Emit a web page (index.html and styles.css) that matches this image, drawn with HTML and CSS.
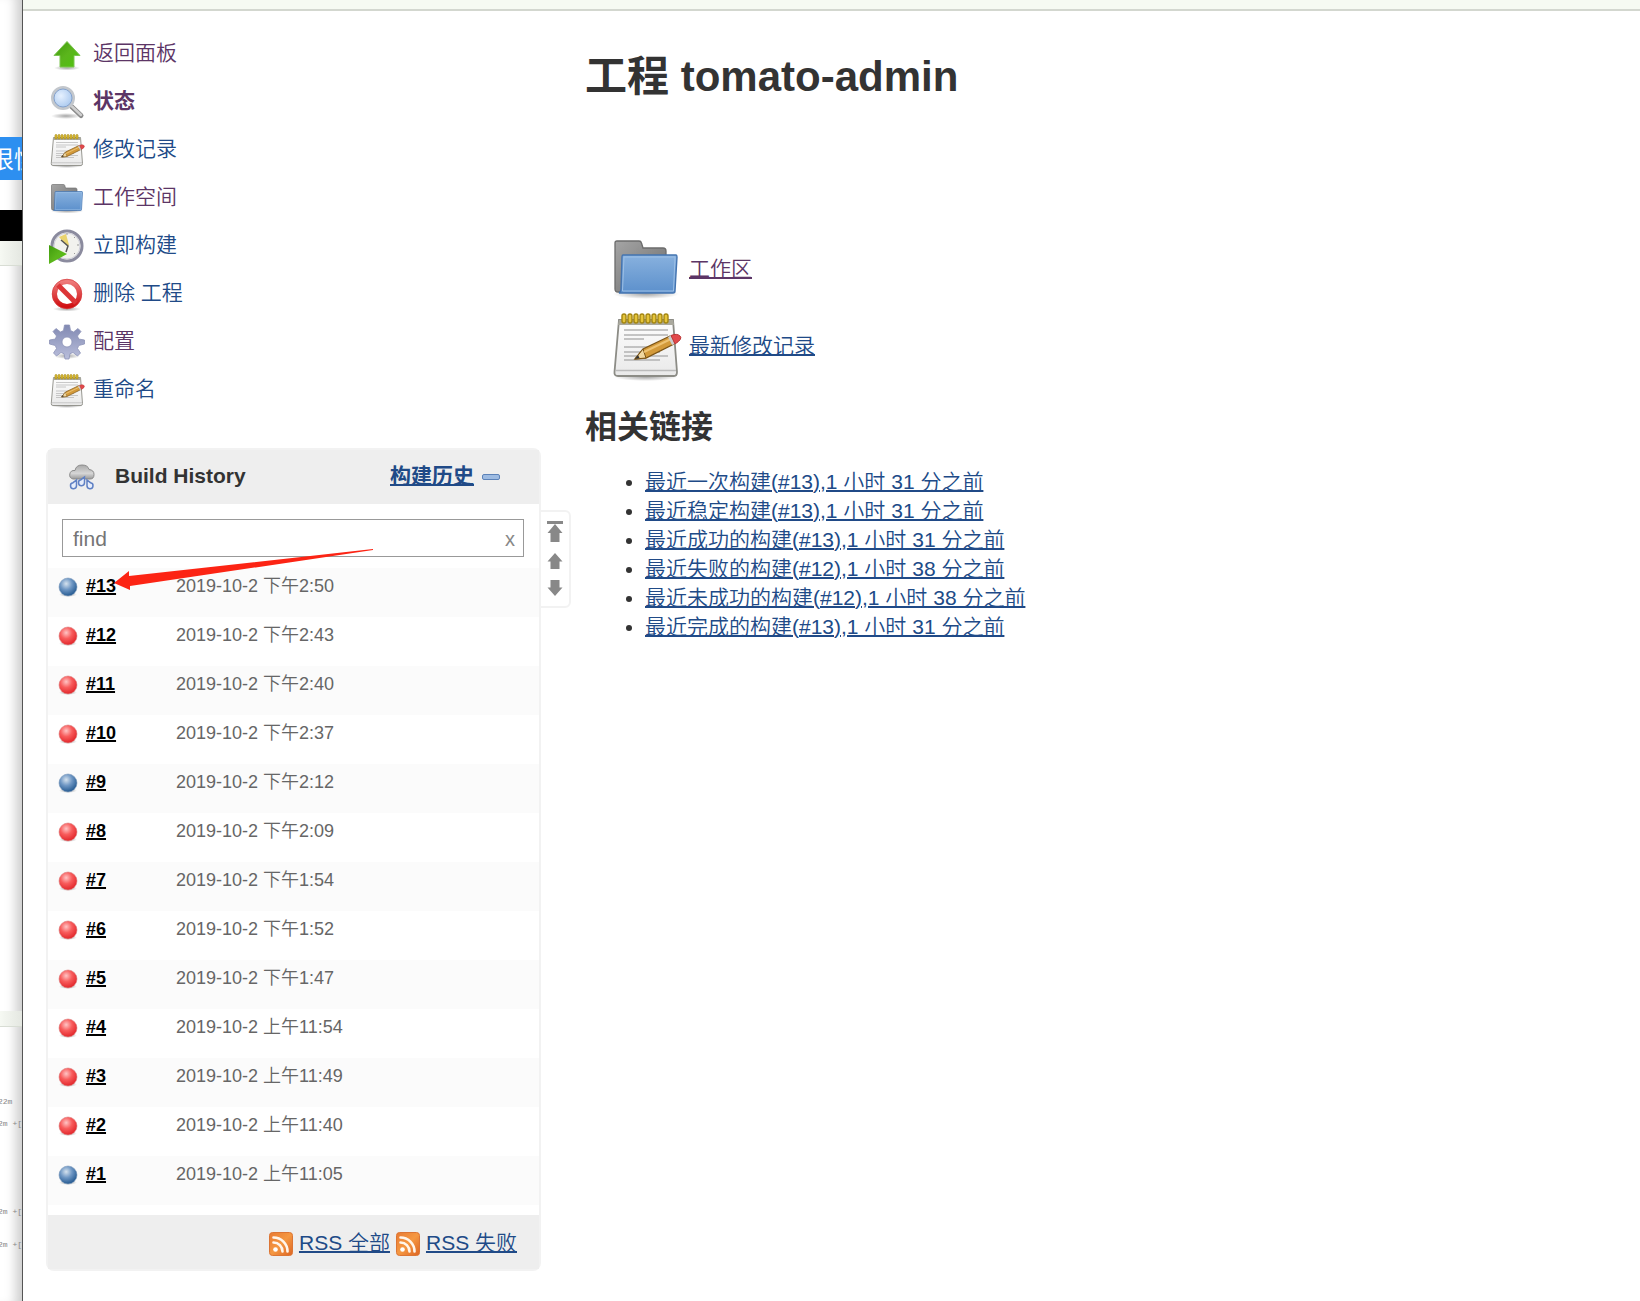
FILE: index.html
```html
<!DOCTYPE html>
<html lang="zh-CN">
<head>
<meta charset="utf-8">
<title>tomato-admin [Jenkins]</title>
<link rel="stylesheet" href="styles.css">
</head>
<body>
<svg class="sprite" aria-hidden="true">
  <defs>
    <linearGradient id="g-green" x1="0" y1="0" x2="1" y2="1"><stop offset="0" stop-color="#3f9a0c"/><stop offset=".5" stop-color="#5bb51c"/><stop offset="1" stop-color="#4fc40e"/></linearGradient>
    <linearGradient id="g-folder" x1="0" y1="0" x2="0" y2="1"><stop offset="0" stop-color="#88b1de"/><stop offset="1" stop-color="#5c90cc"/></linearGradient>
    <linearGradient id="g-back" x1="0" y1="0" x2="1" y2="1"><stop offset="0" stop-color="#a5a5a5"/><stop offset="1" stop-color="#6c6c6c"/></linearGradient>
    <linearGradient id="g-paper" x1="0" y1="0" x2="0" y2="1"><stop offset="0" stop-color="#fdfdfd"/><stop offset="1" stop-color="#e9e9e9"/></linearGradient>
    <linearGradient id="g-red" x1="0" y1="0" x2="0" y2="1"><stop offset="0" stop-color="#ee7b7b"/><stop offset="1" stop-color="#d00f12"/></linearGradient>
    <linearGradient id="g-gear" x1="0" y1="0" x2="0" y2="1"><stop offset="0" stop-color="#8189b2"/><stop offset="1" stop-color="#b9bedb"/></linearGradient>
    <linearGradient id="g-cloud" x1="0" y1="0" x2="0" y2="1"><stop offset="0" stop-color="#a9a9a9"/><stop offset=".6" stop-color="#d6d6d6"/><stop offset="1" stop-color="#999"/></linearGradient>
    <linearGradient id="g-rss" x1="0" y1="0" x2="1" y2="1"><stop offset="0" stop-color="#e87a32"/><stop offset=".5" stop-color="#f59842"/><stop offset="1" stop-color="#dc6422"/></linearGradient>
    <radialGradient id="g-lens" cx=".4" cy=".4" r=".6"><stop offset="0" stop-color="#e6f1ff"/><stop offset="1" stop-color="#a9c8ee"/></radialGradient>
    <radialGradient id="g-shadow"><stop offset="0" stop-color="#000" stop-opacity=".35"/><stop offset="1" stop-color="#000" stop-opacity="0"/></radialGradient>
    <radialGradient id="g-ball-red" cx=".4" cy=".32" r=".65"><stop offset="0" stop-color="#ffc4c4"/><stop offset=".5" stop-color="#f85c5c"/><stop offset="1" stop-color="#e42c30"/></radialGradient>
    <radialGradient id="g-ball-blue" cx=".4" cy=".32" r=".65"><stop offset="0" stop-color="#d5e2ee"/><stop offset=".5" stop-color="#6f97c4"/><stop offset="1" stop-color="#2c6096"/></radialGradient>
  </defs>
  <symbol id="i-up" viewBox="0 0 36 36">
    <ellipse cx="18" cy="32" rx="13" ry="2.5" fill="url(#g-shadow)"/>
    <path d="M18 5.500 31 19.500H25V31H11V19.500H5Z" fill="url(#g-green)" stroke="#7cc552" stroke-width="1" stroke-linejoin="round"/>
  </symbol>
  <symbol id="i-search" viewBox="0 0 36 36">
    <ellipse cx="17" cy="32" rx="15" ry="3" fill="url(#g-shadow)"/>
    <path d="M22 22 32 31.500" stroke="#8b8b8b" stroke-width="5" stroke-linecap="round"/>
    <path d="M23 22.500 32 31" stroke="#cfcfcf" stroke-width="2.500" stroke-linecap="round"/>
    <circle cx="14" cy="14" r="10.500" fill="url(#g-lens)" stroke="#c3c7cc" stroke-width="3"/>
    <circle cx="14" cy="14" r="9" fill="none" stroke="#84a2ce" stroke-width="1"/>
  </symbol>
  <symbol id="i-note" viewBox="0 -2 72 72">
    <ellipse cx="36" cy="66" rx="32" ry="4" fill="url(#g-shadow)"/>
    <path d="M9 9H63L67 61Q67 65 64 65H8Q4 65 4.500 61Z" fill="url(#g-paper)" stroke="#8c8c86" stroke-width="1.800"/>
    <path d="M9 9H63L64 14H8Z" fill="#aaa99e"/>
    <path d="M6 59.500H66" stroke="#bbb" stroke-width="1.500"/>
    <path d="M14 19H58M14 24H58M14 28H34M14 36H58M14 41H50M14 45H58M14 49H50" stroke="#b3b3b3" stroke-width="1.400"/>
    <g fill="#e5c43a" stroke="#a48610" stroke-width="1.400"><rect x="12" y="3" width="4" height="9" rx="2"/><rect x="18" y="3" width="4" height="9" rx="2"/><rect x="24" y="3" width="4" height="9" rx="2"/><rect x="30" y="3" width="4" height="9" rx="2"/><rect x="36" y="3" width="4" height="9" rx="2"/><rect x="42" y="3" width="4" height="9" rx="2"/><rect x="48" y="3" width="4" height="9" rx="2"/><rect x="54" y="3" width="4" height="9" rx="2"/></g>
    <path d="M25 48 33 38 60 25 64 33 36 47Z" fill="#d39a3a" stroke="#7c5415" stroke-width="1.300"/>
    <path d="M25 48 33 38 36 47Z" fill="#f0d7a0" stroke="#7c5415"/>
    <path d="M25 48 28 44 29.500 47Z" fill="#333"/>
    <path d="M34 41 61 28" stroke="#edc272" stroke-width="2"/>
    <path d="M58 26 62 34 65 33 61 24.500Z" fill="#ccc"/>
    <path d="M61 24.500Q67 22 70 25T65 33Z" fill="#e2494b" stroke="#ba3535"/>
  </symbol>
  <symbol id="i-folder" viewBox="0 -2 72 72">
    <ellipse cx="36" cy="60" rx="33" ry="5" fill="url(#g-shadow)"/>
    <path d="M5 9Q5 7 7 7H29Q31 7 31.500 9L33 14H53Q56 14 56 17V58H8Q5 58 5 55Z" fill="url(#g-back)" stroke="#6c6c6c" stroke-width="1.300"/>
    <path d="M13 21H66Q67 21 67 23L65 57Q65 59 63 59H9Q11 58 11 55L12 23Q12 21 13 21Z" fill="url(#g-folder)" stroke="#4474b0" stroke-width="1.400"/>
    <path d="M14 23H65L63.500 57H12.500Z" fill="none" stroke="#9dc0e6" stroke-width="1"/>
  </symbol>
  <symbol id="i-clock" viewBox="0 0 36 36">
    <circle cx="18" cy="18" r="15" fill="#f2f2ee" stroke="#8b8b9e" stroke-width="3"/>
    <circle cx="18" cy="18" r="13" fill="none" stroke="#cfcfda"/>
    <path d="M18 18 10 9 17 6 20 17Z" fill="#e9d36f"/>
    <path d="M12 12 19 18 17 24" fill="none" stroke="#555" stroke-width="1.500"/>
    <path d="M18 5V7M30 17H28M26 9 25 10M26 26 25 25" stroke="#999"/>
    <path d="M0 17 18 26 0 36Z" fill="url(#g-green)"/>
  </symbol>
  <symbol id="i-stop" viewBox="0 0 36 36">
    <ellipse cx="18" cy="33" rx="14" ry="2.500" fill="url(#g-shadow)"/>
    <circle cx="18" cy="18" r="12.500" fill="#fff" stroke="url(#g-red)" stroke-width="5"/>
    <path d="M9 9 27 27" stroke="#dc3537" stroke-width="5"/>
    <circle cx="18" cy="18" r="14.800" fill="none" stroke="#d64042" stroke-width=".7"/>
  </symbol>
  <symbol id="i-gear" viewBox="0 0 36 36">
    <ellipse cx="18" cy="32" rx="13" ry="3" fill="url(#g-shadow)"/>
    <path fill-rule="evenodd" d="M15.500 1H20.500L21.500 6.500 24.500 8 29 4.500 32 7.500 28.500 12 29.700 15 35.500 16V20L29.700 21.500 28.500 24.500 31.500 29 28.500 32 24 28.500 21 29.700 20 35H16L15 29.700 12 28.500 7.500 32 4.500 29 7.500 24.500 6.300 21.500.5 20V16L6.300 15 7.500 12 4 7.500 7 4.500 11.500 8 14.500 6.500ZM18 13A5 5 0 1 0 18 23 5 5 0 1 0 18 13Z" fill="url(#g-gear)" stroke="#8d93b8" stroke-width=".8" stroke-linejoin="round"/>
  </symbol>
  <symbol id="i-rain" viewBox="0 0 26 26">
    <path d="M4 15Q0 14 .8 10T6 6.500Q7 1 13 1T20 5.500Q25 6 25 10.500T21 15Z" fill="url(#g-cloud)" stroke="#8b8b8b"/>
    <g fill="#e6edfb" stroke="#5f80c4" stroke-width="1.500"><path d="M7.500 16V21.500A3 3 0 1 1 4 18.700Z"/><path d="M15.500 13V18.500A3 3 0 1 1 12 15.700Z"/><path d="M18 16V21.500A3 3 0 1 0 21.500 18.700Z"/></g>
  </symbol>
  <symbol id="i-rss" viewBox="0 0 24 24">
    <rect x=".5" y=".5" width="23" height="23" rx="3" fill="url(#g-rss)" stroke="#dc7534"/>
    <circle cx="6.500" cy="17.500" r="2.300" fill="#fff"/>
    <path d="M4.500 10.500A9 9 0 0 1 13.500 19.500M4.500 5.500A14 14 0 0 1 18.500 19.500" fill="none" stroke="#fff6ec" stroke-width="2.600" stroke-linecap="round"/>
  </symbol>
  <symbol id="i-red" viewBox="0 0 20 20"><ellipse cx="10" cy="17.500" rx="9" ry="2.500" fill="url(#g-shadow)"/><circle cx="10" cy="10" r="9" fill="url(#g-ball-red)" stroke="#dc8080" stroke-width=".6"/></symbol>
  <symbol id="i-blue" viewBox="0 0 20 20"><ellipse cx="10" cy="17.500" rx="9" ry="2.500" fill="url(#g-shadow)"/><circle cx="10" cy="10" r="9" fill="url(#g-ball-blue)" stroke="#7c9abc" stroke-width=".6"/></symbol>
  <symbol id="i-arrow" viewBox="0 0 16 18"><path d="M8 1 15.500 9.500H12.500V17H3.500V9.500H.5Z" fill="currentColor"/></symbol>
  <symbol id="i-top" viewBox="0 0 18 22"><path d="M1 0H17V3H1ZM9 3 16.500 12H13.500V21H4.500V12H1.500Z" fill="currentColor"/></symbol>
</svg>

<div class="desktop">
  <aside class="behind" aria-hidden="true">
    <div class="behind-selection">很慢</div>
    <div class="behind-black"></div>
    <div class="behind-bar"></div>
    <div class="behind-bar behind-bar-low"></div>
    <div class="behind-log"><span>22m</span><span>2m +[</span></div>
    <div class="behind-log behind-log-two"><span>2m +[</span></div>
    <div class="behind-log behind-log-three"><span>2m +[</span></div>
  </aside>

  <div class="window">
    <div class="breadcrumb-bar"></div>
    <div class="page">
      <div class="side">
        <nav class="tasks">
          <a class="task visited" href="#"><svg class="icon"><use href="#i-up"/></svg>返回面板</a>
          <a class="task visited current" href="#"><svg class="icon"><use href="#i-search"/></svg>状态</a>
          <a class="task" href="#"><svg class="icon"><use href="#i-note"/></svg>修改记录</a>
          <a class="task visited" href="#"><svg class="icon"><use href="#i-folder"/></svg>工作空间</a>
          <a class="task" href="#"><svg class="icon"><use href="#i-clock"/></svg>立即构建</a>
          <a class="task" href="#"><svg class="icon"><use href="#i-stop"/></svg>删除 工程</a>
          <a class="task visited" href="#"><svg class="icon"><use href="#i-gear"/></svg>配置</a>
          <a class="task" href="#"><svg class="icon"><use href="#i-note"/></svg>重命名</a>
        </nav>

        <section class="history">
          <header class="history-head">
            <svg class="rain"><use href="#i-rain"/></svg>
            <h2>Build History</h2>
            <a href="#">构建历史</a>
            <button class="collapse" type="button" aria-label="Collapse"></button>
          </header>
          <div class="find">
            <input type="text" placeholder="find" aria-label="find">
            <button type="button" aria-label="Clear">x</button>
          </div>
          <table class="builds">
            <tbody>
              <tr><td class="ball"><svg><use href="#i-blue"/></svg></td><td class="num"><a href="#">#13</a></td><td>2019-10-2 下午2:50</td></tr>
              <tr><td class="ball"><svg><use href="#i-red"/></svg></td><td class="num"><a href="#">#12</a></td><td>2019-10-2 下午2:43</td></tr>
              <tr><td class="ball"><svg><use href="#i-red"/></svg></td><td class="num"><a href="#">#11</a></td><td>2019-10-2 下午2:40</td></tr>
              <tr><td class="ball"><svg><use href="#i-red"/></svg></td><td class="num"><a href="#">#10</a></td><td>2019-10-2 下午2:37</td></tr>
              <tr><td class="ball"><svg><use href="#i-blue"/></svg></td><td class="num"><a href="#">#9</a></td><td>2019-10-2 下午2:12</td></tr>
              <tr><td class="ball"><svg><use href="#i-red"/></svg></td><td class="num"><a href="#">#8</a></td><td>2019-10-2 下午2:09</td></tr>
              <tr><td class="ball"><svg><use href="#i-red"/></svg></td><td class="num"><a href="#">#7</a></td><td>2019-10-2 下午1:54</td></tr>
              <tr><td class="ball"><svg><use href="#i-red"/></svg></td><td class="num"><a href="#">#6</a></td><td>2019-10-2 下午1:52</td></tr>
              <tr><td class="ball"><svg><use href="#i-red"/></svg></td><td class="num"><a href="#">#5</a></td><td>2019-10-2 下午1:47</td></tr>
              <tr><td class="ball"><svg><use href="#i-red"/></svg></td><td class="num"><a href="#">#4</a></td><td>2019-10-2 上午11:54</td></tr>
              <tr><td class="ball"><svg><use href="#i-red"/></svg></td><td class="num"><a href="#">#3</a></td><td>2019-10-2 上午11:49</td></tr>
              <tr><td class="ball"><svg><use href="#i-red"/></svg></td><td class="num"><a href="#">#2</a></td><td>2019-10-2 上午11:40</td></tr>
              <tr><td class="ball"><svg><use href="#i-blue"/></svg></td><td class="num"><a href="#">#1</a></td><td>2019-10-2 上午11:05</td></tr>
            </tbody>
          </table>
          <footer class="feeds">
            <svg><use href="#i-rss"/></svg><a href="#">RSS 全部</a>
            <svg><use href="#i-rss"/></svg><a href="#">RSS 失败</a>
          </footer>
          <div class="pager">
            <button type="button" class="newest" aria-label="Newest"><svg><use href="#i-top"/></svg></button>
            <button type="button" aria-label="Newer"><svg><use href="#i-arrow"/></svg></button>
            <button type="button" class="older" aria-label="Older"><svg><use href="#i-arrow"/></svg></button>
          </div>
          <svg class="pointer" viewBox="0 0 262 44" aria-hidden="true"><path d="M1 35 16 23 16 28 260 1 260 2 17 38 17 42Z" fill="#fc2414"/></svg>
        </section>
      </div>

      <main class="main">
        <h1>工程 tomato-admin</h1>
        <div class="shortcuts">
          <div class="shortcut"><svg><use href="#i-folder"/></svg><a class="visited" href="#">工作区</a></div>
          <div class="shortcut"><svg><use href="#i-note"/></svg><a href="#">最新修改记录</a></div>
        </div>
        <h2>相关链接</h2>
        <ul class="permalinks">
          <li><a href="#">最近一次构建(#13),1 小时 31 分之前</a></li>
          <li><a href="#">最近稳定构建(#13),1 小时 31 分之前</a></li>
          <li><a href="#">最近成功的构建(#13),1 小时 31 分之前</a></li>
          <li><a href="#">最近失败的构建(#12),1 小时 38 分之前</a></li>
          <li><a href="#">最近未成功的构建(#12),1 小时 38 分之前</a></li>
          <li><a href="#">最近完成的构建(#13),1 小时 31 分之前</a></li>
        </ul>
      </main>
    </div>
  </div>
</div>
</body>
</html>
```

FILE: styles.css
```css
* {
  box-sizing: border-box;
}

body {
  margin: 0;
  background: #fff;
  color: #333;
  font-family: "Liberation Sans", "Noto Sans CJK SC", sans-serif;
  font-size: 21px;
  font-weight: 350;
  line-height: 29px;
}

a {
  color: #204a87;
  text-decoration-thickness: 2px;
}

a.visited {
  color: #5c3566;
}

button {
  border: 0;
  padding: 0;
  background: none;
  color: #888;
  font: inherit;
}

.sprite {
  position: absolute;
  width: 0;
  height: 0;
}

.desktop {
  display: grid;
  grid-template-columns: 22px minmax(0, 1fr);
  min-height: 100vh;
}

/* Slice of the window lying behind the browser */
.behind {
  overflow: hidden;
  padding-top: 137px;
  box-shadow: inset -14px 0 12px -8px #ccc;
}

.behind-selection {
  height: 43px;
  margin-left: -10px;
  background: #2d8ff0;
  color: #fff;
  font-size: 24px;
  font-weight: 400;
  line-height: 46px;
  white-space: nowrap;
}

.behind-black {
  height: 31px;
  margin-top: 30px;
  background: #000;
}

.behind-bar {
  height: 25px;
  border-bottom: 1px solid #d8ddd4;
  background: linear-gradient(90deg, #f6f9f3, #e4e7e1);
}

.behind-bar-low {
  height: 16px;
  margin-top: 745px;
}

.behind-log {
  display: grid;
  margin-top: 64px;
  margin-left: -2px;
  color: #888;
  font-family: "Liberation Mono", monospace;
  font-size: 8px;
  line-height: 22px;
  white-space: pre;
}

.behind-log-two {
  margin-top: 66px;
}

.behind-log-three {
  margin-top: 11px;
}

.window {
  border-left: 1px solid #555;
  background: #fff;
}

.breadcrumb-bar {
  height: 11px;
  border-bottom: 2px solid #d3d7cf;
  background: #f6faf2;
}

.page {
  display: grid;
  grid-template-columns: 518px minmax(0, 1fr);
  gap: 44px;
}

.side {
  padding: 18px 0 30px 23px;
}

.tasks {
  display: grid;
  padding-left: 3px;
}

.task {
  display: flex;
  align-items: center;
  gap: 8px;
  height: 48px;
  padding-bottom: 2px;
  text-decoration: none;
}

.task .icon {
  width: 36px;
  height: 36px;
  margin-top: 4px;
}

.current {
  font-weight: 700;
}

.history {
  position: relative;
  margin-top: 35px;
  border: 2px solid #f2f2f2;
  border-radius: 8px;
}

.history-head {
  display: flex;
  align-items: center;
  height: 54px;
  padding: 0 39px 0 21px;
  background: #eee;
}

.history-head h2 {
  flex: 1;
  margin: 0 0 4px 20px;
  font-size: 21px;
}

.history-head a {
  margin-bottom: 4px;
  font-weight: 700;
}

.rain {
  width: 26px;
  height: 26px;
}

.collapse {
  width: 18px;
  height: 6px;
  margin-left: 8px;
  border: 1px solid #5c82b8;
  border-radius: 2px;
  background: #9dbbe2;
}

.find {
  display: flex;
  height: 38px;
  margin: 15px 15px 11px 14px;
  border: 1px solid #999;
}

.find input {
  flex: 1;
  min-width: 0;
  padding: 0 10px;
  border: 0;
  outline: 0;
  background: none;
  color: #333;
  font: inherit;
}

.find input::placeholder {
  color: #757575;
}

.find button {
  width: 26px;
  padding-top: 2px;
  font-size: 20px;
}

.builds {
  width: 100%;
  border-collapse: collapse;
  font-size: 18px;
  color: #666;
  line-height: 24px;
}

.builds tr {
  height: 49px;
}

.builds tr:nth-child(odd) {
  background: #fbfbfb;
}

.builds td {
  padding: 6px 0 0;
  vertical-align: top;
}

.builds .ball {
  width: 38px;
  padding-left: 10px;
}

.ball svg {
  display: block;
  width: 20px;
  height: 26px;
}

.builds .num {
  width: 90px;
}

.num a {
  color: #000;
  font-weight: 700;
}

.feeds {
  display: flex;
  align-items: center;
  justify-content: flex-end;
  gap: 6px;
  height: 54px;
  margin-top: 10px;
  padding-right: 22px;
  background: #eee;
}

.feeds svg {
  width: 24px;
  height: 24px;
  margin-top: 4px;
}

.pager {
  position: absolute;
  top: 60px;
  left: 100%;
  display: grid;
  justify-items: center;
  align-content: space-evenly;
  width: 32px;
  height: 98px;
  border: 2px solid #f2f2f2;
  border-radius: 0 6px 6px 0;
}

.pager svg {
  display: block;
  width: 16px;
  height: 18px;
}

.pager .newest svg {
  width: 18px;
  height: 22px;
}

.older svg {
  transform: rotate(180deg);
}

.pointer {
  position: absolute;
  top: 98px;
  left: 65px;
  width: 262px;
  height: 44px;
}

.main {
  padding-top: 42px;
}

.main h1 {
  margin: 0;
  font-size: 42px;
  line-height: 48px;
}

.shortcuts {
  display: grid;
  gap: 5px;
  margin: 131px 0 0 25px;
}

.shortcut {
  display: flex;
  align-items: center;
  gap: 7px;
}

.shortcut svg {
  width: 72px;
  height: 72px;
}

.main h2 {
  margin: 26px 0 20px;
  font-size: 32px;
  line-height: 40px;
}

.permalinks {
  margin: 0;
  padding-left: 60px;
}
```
